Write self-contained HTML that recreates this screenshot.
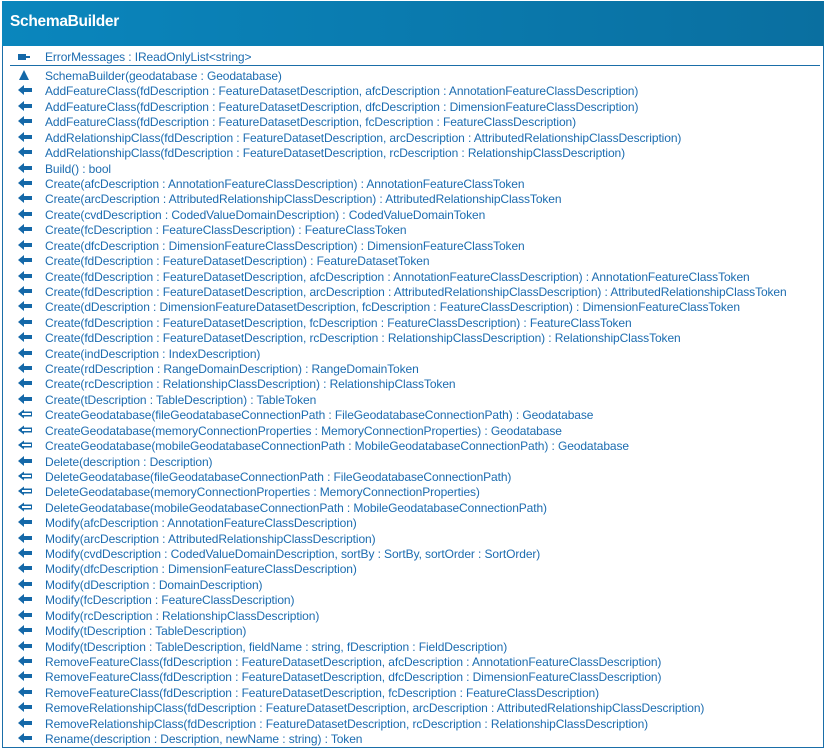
<!DOCTYPE html>
<html><head><meta charset="utf-8"><style>
html,body{margin:0;padding:0;background:#fff;width:828px;height:753px;overflow:hidden;position:relative}
.box{position:absolute;left:2px;top:1px;width:820px;height:746px;border:1px solid #1a6ea8;border-top:none}
.hd{position:absolute;left:2px;top:1px;width:822px;height:45px;background:linear-gradient(90deg,#0a86bd,#0a6fa0);}
.hd span{position:absolute;left:8px;top:12px;color:#fff;font:bold 15.5px "Liberation Sans",sans-serif;letter-spacing:-0.3px}
.sep{position:absolute;left:10px;top:65px;width:810px;height:1px;background:#1a6ea8}
.r{position:absolute;left:45px;height:15px;line-height:15px;font:12px "Liberation Sans",sans-serif;color:#1c6cb0;white-space:nowrap;letter-spacing:-0.1px}
svg{position:absolute;left:17px}
</style></head><body>
<div class="box"></div>
<div class="hd"><span>SchemaBuilder</span></div>
<div class="sep"></div>
<svg style="top:52px" width="16" height="10"><rect x="1" y="2" width="8" height="6" fill="#1468a8"/><rect x="9" y="4" width="4" height="2" fill="#1468a8"/></svg>
<div class="r" style="top:50px">ErrorMessages : IReadOnlyList&lt;string&gt;</div>
<div id="rows"></div>
<script>
var L=[
["t","SchemaBuilder(geodatabase : Geodatabase)"],
["f","AddFeatureClass(fdDescription : FeatureDatasetDescription, afcDescription : AnnotationFeatureClassDescription)"],
["f","AddFeatureClass(fdDescription : FeatureDatasetDescription, dfcDescription : DimensionFeatureClassDescription)"],
["f","AddFeatureClass(fdDescription : FeatureDatasetDescription, fcDescription : FeatureClassDescription)"],
["f","AddRelationshipClass(fdDescription : FeatureDatasetDescription, arcDescription : AttributedRelationshipClassDescription)"],
["f","AddRelationshipClass(fdDescription : FeatureDatasetDescription, rcDescription : RelationshipClassDescription)"],
["f","Build() : bool"],
["f","Create(afcDescription : AnnotationFeatureClassDescription) : AnnotationFeatureClassToken"],
["f","Create(arcDescription : AttributedRelationshipClassDescription) : AttributedRelationshipClassToken"],
["f","Create(cvdDescription : CodedValueDomainDescription) : CodedValueDomainToken"],
["f","Create(fcDescription : FeatureClassDescription) : FeatureClassToken"],
["f","Create(dfcDescription : DimensionFeatureClassDescription) : DimensionFeatureClassToken"],
["f","Create(fdDescription : FeatureDatasetDescription) : FeatureDatasetToken"],
["f","Create(fdDescription : FeatureDatasetDescription, afcDescription : AnnotationFeatureClassDescription) : AnnotationFeatureClassToken"],
["f","Create(fdDescription : FeatureDatasetDescription, arcDescription : AttributedRelationshipClassDescription) : AttributedRelationshipClassToken"],
["f","Create(dDescription : DimensionFeatureDatasetDescription, fcDescription : FeatureClassDescription) : DimensionFeatureClassToken"],
["f","Create(fdDescription : FeatureDatasetDescription, fcDescription : FeatureClassDescription) : FeatureClassToken"],
["f","Create(fdDescription : FeatureDatasetDescription, rcDescription : RelationshipClassDescription) : RelationshipClassToken"],
["f","Create(indDescription : IndexDescription)"],
["f","Create(rdDescription : RangeDomainDescription) : RangeDomainToken"],
["f","Create(rcDescription : RelationshipClassDescription) : RelationshipClassToken"],
["f","Create(tDescription : TableDescription) : TableToken"],
["h","CreateGeodatabase(fileGeodatabaseConnectionPath : FileGeodatabaseConnectionPath) : Geodatabase"],
["h","CreateGeodatabase(memoryConnectionProperties : MemoryConnectionProperties) : Geodatabase"],
["h","CreateGeodatabase(mobileGeodatabaseConnectionPath : MobileGeodatabaseConnectionPath) : Geodatabase"],
["f","Delete(description : Description)"],
["h","DeleteGeodatabase(fileGeodatabaseConnectionPath : FileGeodatabaseConnectionPath)"],
["h","DeleteGeodatabase(memoryConnectionProperties : MemoryConnectionProperties)"],
["h","DeleteGeodatabase(mobileGeodatabaseConnectionPath : MobileGeodatabaseConnectionPath)"],
["f","Modify(afcDescription : AnnotationFeatureClassDescription)"],
["f","Modify(arcDescription : AttributedRelationshipClassDescription)"],
["f","Modify(cvdDescription : CodedValueDomainDescription, sortBy : SortBy, sortOrder : SortOrder)"],
["f","Modify(dfcDescription : DimensionFeatureClassDescription)"],
["f","Modify(dDescription : DomainDescription)"],
["f","Modify(fcDescription : FeatureClassDescription)"],
["f","Modify(rcDescription : RelationshipClassDescription)"],
["f","Modify(tDescription : TableDescription)"],
["f","Modify(tDescription : TableDescription, fieldName : string, fDescription : FieldDescription)"],
["f","RemoveFeatureClass(fdDescription : FeatureDatasetDescription, afcDescription : AnnotationFeatureClassDescription)"],
["f","RemoveFeatureClass(fdDescription : FeatureDatasetDescription, dfcDescription : DimensionFeatureClassDescription)"],
["f","RemoveFeatureClass(fdDescription : FeatureDatasetDescription, fcDescription : FeatureClassDescription)"],
["f","RemoveRelationshipClass(fdDescription : FeatureDatasetDescription, arcDescription : AttributedRelationshipClassDescription)"],
["f","RemoveRelationshipClass(fdDescription : FeatureDatasetDescription, rcDescription : RelationshipClassDescription)"],
["f","Rename(description : Description, newName : string) : Token"]];
var h="";
L.forEach(function(x,i){var c=75+i*15.42;var t=(c-6).toFixed(1);var st=(c-6).toFixed(1);
var ic;
if(x[0]=="t")ic='<polygon points="7,1 12,11 2,11" fill="#1468a8"/>';
else if(x[0]=="f")ic='<polygon points="1,6 7,1 7,4 15,4 15,8 7,8 7,11" fill="#1468a8"/>';
else ic='<polygon points="1,6 7,1.5 7,10.5" fill="#1468a8"/><rect x="6" y="3.5" width="9" height="5" fill="#1468a8"/><rect x="5" y="5" width="9" height="2" fill="#fff"/>';
h+='<svg style="top:'+st+'px" width="16" height="12">'+ic+'</svg><div class="r" style="top:'+t+'px">'+x[1]+'</div>';});
document.getElementById("rows").innerHTML=h;
</script>
</body></html>
